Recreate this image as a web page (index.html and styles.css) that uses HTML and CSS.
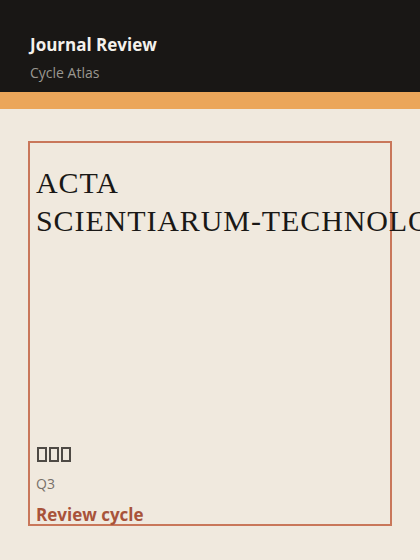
FILE: index.html
```html
<!DOCTYPE html>
<html lang="en">
<head>
    <meta charset="UTF-8">
    <meta name="viewport" content="width=device-width, initial-scale=1.0">
    <title>Journal Review</title>
    <link rel="stylesheet" href="styles.css">
</head>
<body>
    <header class="top">
        <h1 class="app-title">Journal Review</h1>
        <p class="app-sub">Cycle Atlas</p>
    </header>
    <div class="stripe"></div>

    <main class="page">
        <div class="card">
            <h2 class="journal">ACTA <span class="nowrap">SCIENTIARUM-TECHNOLOGY</span></h2>
            <div class="meta">
                <!-- subject name, shown as missing-glyph boxes -->
                <span class="field">
                    <span class="box"></span><span class="box"></span><span class="box"></span>
                </span>
                <span class="quartile">Q3</span>
                <a class="cycle" href="#">Review cycle</a>
            </div>
        </div>
    </main>
</body>
</html>
```

FILE: styles.css
```css
:root {
    --bg-main: #f0e9de;
    --bg-head: #191715;
    --accent: #eba65a;
    --rust: #c9775a;
    --link: #a8533a;
    --ink: #1a1816;
    --muted: #777069;
}

body {
    margin: 0;
    background: var(--bg-main);
    font-family: "Open Sans", "Noto Sans", sans-serif;
    color: var(--ink);
}

.top {
    background: var(--bg-head);
    height: 92px;
    box-sizing: border-box;
    padding: 33px 30px 0;
}

.app-title {
    margin: 0;
    font-size: 17px;
    font-weight: 700;
    line-height: 24px;
    color: #f4f1ec;
}

.app-sub {
    margin: 6px 0 0;
    font-size: 14px;
    line-height: 20px;
    color: #9b9791;
}

.stripe {
    height: 17px;
    background: var(--accent);
}

.page {
    padding: 32px 28px;
}

.card {
    border: 2px solid var(--rust);
    height: 385px;
    box-sizing: border-box;
    padding: 21px 6px 0;
    display: flex;
    flex-direction: column;
    justify-content: space-between;
}

.journal {
    margin: 0;
    font-family: "Liberation Serif", serif;
    font-weight: 400;
    font-size: 30px;
    letter-spacing: 0.9px;
    line-height: 38px;
    color: var(--ink);
}

.nowrap {
    white-space: nowrap;
}

.meta {
    display: flex;
    flex-direction: column;
    align-items: flex-start;
}

.field {
    display: flex;
    gap: 2px;
    align-items: center;
    height: 24px;
    padding-left: 1px;
}

.box {
    width: 10px;
    height: 15px;
    box-sizing: border-box;
    border: 2px solid #4e4a45;
}

.quartile {
    margin-top: 8px;
    font-size: 14px;
    line-height: 20px;
    color: var(--muted);
}

.cycle {
    margin-top: 12px;
    font-size: 17px;
    font-weight: 700;
    line-height: 18px;
    color: var(--link);
    text-decoration: none;
}
```
